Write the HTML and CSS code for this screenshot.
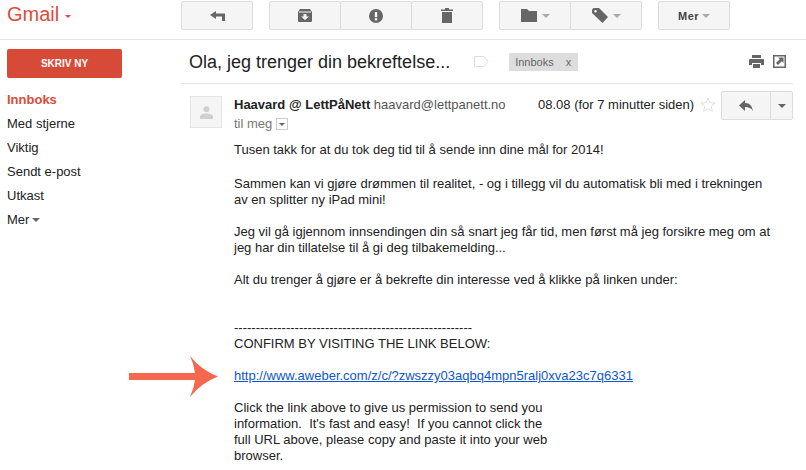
FILE: index.html
```html
<!DOCTYPE html>
<html lang="no">
<head>
    <meta charset="UTF-8">
    <title>Gmail</title>
    <link rel="stylesheet" href="styles.css">
</head>
<body>
    <header class="topbar">
        <div class="logo">Gmail<span class="logo-caret"></span></div>
        <div class="toolbar">
            <div class="btn-group back-group">
                <button class="btn btn-back">
                    <svg width="15" height="10" viewBox="0 0 15 10"><path d="M0 4 6 0v2.500h9V10h-3V5.500H6V8z" fill="#666"/></svg>
                </button>
            </div>
            <div class="btn-group action-group">
                <button class="btn btn-action">
                    <svg width="14" height="13" viewBox="0 0 14 13"><path d="M2 0h10l2 3v9a1 1 0 0 1-1 1H1a1 1 0 0 1-1-1V3z" fill="#666"/><path d="M5.500 5h3v2.500H11L7 11 3 7.500h2.500z" fill="#f5f5f5"/><rect x="1" y="2.500" width="12" height="1" fill="#f5f5f5"/></svg>
                </button>
                <button class="btn btn-action">
                    <svg width="14" height="14" viewBox="0 0 14 14"><circle cx="7" cy="7" r="7" fill="#666"/><rect x="5.800" y="3" width="2.400" height="5.200" fill="#f5f5f5"/><rect x="5.800" y="9.300" width="2.400" height="2.200" fill="#f5f5f5"/></svg>
                </button>
                <button class="btn btn-action">
                    <svg width="12" height="15" viewBox="0 0 12 15"><path d="M4 0h4v1.500h4V3H0V1.500h4zM1 4h10v11H1z" fill="#666"/></svg>
                </button>
            </div>
            <div class="btn-group label-group">
                <button class="btn btn-drop">
                    <svg width="16" height="13" viewBox="0 0 16 13"><path d="M0 0h6l2 2h8v11H0z" fill="#666"/></svg>
                    <span class="caret"></span>
                </button>
                <button class="btn btn-drop">
                    <svg width="16" height="15" viewBox="0 0 16 15"><path d="M0 1.500 1.500 0H7l9 9-5.500 6L0 5z" fill="#666"/><circle cx="3.500" cy="3.200" r="1.200" fill="#f5f5f5"/></svg>
                    <span class="caret"></span>
                </button>
            </div>
            <div class="btn-group more-group">
                <button class="btn btn-more">Mer <span class="caret"></span></button>
            </div>
        </div>
    </header>

    <div class="main">
        <nav class="sidebar">
            <a class="compose">SKRIV NY</a>
            <ul class="folders">
                <li class="active">Innboks</li>
                <li>Med stjerne</li>
                <li>Viktig</li>
                <li>Sendt e-post</li>
                <li>Utkast</li>
                <li>Mer<span class="caret caret-dark caret-mer"></span></li>
            </ul>
        </nav>

        <section class="thread">
            <div class="subject-row">
                <h1 class="subject">Ola, jeg trenger din bekreftelse...</h1>
                <svg class="subject-tag" width="15" height="11" viewBox="0 0 15 11"><path d="M.5.500h9.500l4 5-4 5H.5z" fill="#fff" stroke="#ddd"/></svg>
                <span class="chip">Innboks <b>x</b></span>
                <span class="subject-icons">
                    <svg width="15" height="13" viewBox="0 0 15 13"><path d="M3 0h9v3H3zM1 4h13a1 1 0 0 1 1 1v5h-3V8H3v2H0V5a1 1 0 0 1 1-1zM4 9h7v4H4z" fill="#666"/></svg>
                    <svg width="13" height="13" viewBox="0 0 13 13"><path d="M0 0h13v13H0zM1.500 1.500v10h10v-10z" fill="#666"/><path d="M5 2.500h5.500V8L8.700 6.200 5 10 3 8l3.800-3.700z" fill="#666"/></svg>
                </span>
            </div>

            <div class="message">
                <div class="avatar">
                    <svg width="13" height="13" viewBox="0 0 13 13"><circle cx="6.500" cy="3.300" r="3" fill="#d0d0d0"/><path d="M0 13v-2.500C0 8.500 3 7.500 6.500 7.500s6.500 1 6.500 3V13z" fill="#d0d0d0"/></svg>
                </div>
                <div class="message-content">
                    <div class="message-head">
                        <div class="sender"><b>Haavard @ LettPåNett</b> <span class="address">haavard@lettpanett.no</span></div>
                        <span class="date">08.08 (for 7 minutter siden)</span>
                        <svg class="star" width="16" height="15" viewBox="0 0 16 15"><path d="m8 1 2 4.700 5 .4-3.800 3.300 1.200 4.900L8 11.700l-4.400 2.600 1.200-4.900L1 6.100l5-.4z" fill="#fff" stroke="#dedede"/></svg>
                        <div class="reply-group">
                            <button class="btn btn-reply">
                                <svg width="14" height="11" viewBox="0 0 14 11"><path d="M6 0v3c5 0 7 3 8 8-2-3-4-4-8-4v4L0 5.500z" fill="#666"/></svg>
                            </button>
                            <button class="btn btn-reply-more"><span class="caret caret-dark"></span></button>
                        </div>
                    </div>
                    <div class="to-me">til meg <span class="to-toggle"><span class="caret caret-dark caret-tiny"></span></span></div>
                    <div class="body-text">
                        <p class="intro">Tusen takk for at du tok deg tid til å sende inn dine mål for 2014!</p>
                        <p>Sammen kan vi gjøre drømmen til realitet, - og i tillegg vil du automatisk bli med i trekningen<br>av en splitter ny iPad mini!</p>
                        <p>Jeg vil gå igjennom innsendingen din så snart jeg får tid, men først må jeg forsikre meg om at<br>jeg har din tillatelse til å gi deg tilbakemelding...</p>
                        <p class="gap-after">Alt du trenger å gjøre er å bekrefte din interesse ved å klikke på linken under:</p>
                        <p><span class="dashes">-------------------------------------------------------</span><br>CONFIRM BY VISITING THE LINK BELOW:</p>
                        <p><a href="#">http://www.aweber.com/z/c/?zwszzy03aqbq4mpn5ralj0xva23c7q6331</a></p>
                        <p>Click the link above to give us permission to send you<br>information.&nbsp; It's fast and easy!&nbsp; If you cannot click the<br>full URL above, please copy and paste it into your web<br>browser.</p>
                    </div>
                </div>
            </div>
        </section>
    </div>

    <!-- annotation painted on top of the screenshot -->
    <svg class="arrow" width="90" height="42" viewBox="0 0 90 42"><path d="M0 17H66Q65 8 61 0 72 14 89 20.500 72 27 61 41 65 32 66 24H0z" fill="#f4694e"/></svg>
</body>
</html>
```

FILE: styles.css
```css
html, body {
    margin: 0;
    padding: 0;
}
body {
    width: 806px;
    height: 470px;
    overflow: hidden;
    background-color: #fff;
    color: #222;
    font-family: "Liberation Sans", Arial, sans-serif;
    font-size: 13px;
    position: relative;
}
.topbar {
    display: flex;
    height: 39px;
    border-bottom: 1px solid #e5e5e5;
}
.logo {
    width: 181px;
    box-sizing: border-box;
    padding: 2px 0 0 7px;
    color: #dd4b39;
    font-size: 20px;
    line-height: 24px;
}
.logo-caret {
    display: inline-block;
    margin: 0 0 3px 6px;
    border: 3.500px solid transparent;
    border-top-color: #dd4b39;
    border-bottom: 0;
}
.toolbar {
    display: flex;
    padding-top: 1px;
}
.btn-group {
    display: flex;
    height: 29px;
    margin-right: 16px;
}
.btn {
    display: flex;
    align-items: center;
    justify-content: center;
    height: 29px;
    padding: 0;
    box-sizing: border-box;
    background-color: #f5f5f5;
    border: 1px solid #dcdcdc;
    border-radius: 2px;
    font-family: inherit;
}
.btn-group .btn + .btn {
    margin-left: -1px;
}
.btn-back {
    width: 72px;
}
.btn-action {
    width: 72px;
}
.btn-drop {
    width: 72px;
    gap: 5px;
}
.btn-more {
    width: 72px;
    gap: 3px;
    color: #444;
    font-size: 11px;
    font-weight: bold;
    letter-spacing: .5px;
}
.caret {
    display: inline-block;
    border: 4px solid transparent;
    border-top-color: #aaa;
    border-bottom: 0;
}
.caret-dark {
    border-top-color: #666;
}
.caret-tiny {
    border-width: 3px;
    border-bottom: 0;
}
.caret-mer {
    margin: 0 0 2px 3px;
}
.main {
    display: flex;
}
.sidebar {
    width: 181px;
    flex: none;
    box-sizing: border-box;
    padding: 9px 0 0 7px;
}
.compose {
    display: block;
    width: 115px;
    height: 29px;
    box-sizing: border-box;
    background-color: #d84a38;
    border-radius: 2px;
    color: #fff;
    font-size: 10px;
    font-weight: bold;
    line-height: 29px;
    text-align: center;
}
.folders {
    list-style: none;
    margin: 10px 0 0;
    padding: 0;
}
.folders li {
    height: 24px;
    line-height: 24px;
}
.folders .active {
    color: #dd4b39;
    font-weight: bold;
}
.thread {
    width: 612px;
}
.subject-row {
    display: flex;
    align-items: center;
    height: 43px;
    border-bottom: 1px solid #e5e5e5;
    padding-left: 8px;
}
.subject {
    margin: 0;
    font-size: 18px;
    font-weight: normal;
    line-height: 24px;
}
.subject-tag {
    margin-left: 24px;
}
.chip {
    display: flex;
    justify-content: space-between;
    width: 69px;
    height: 18px;
    box-sizing: border-box;
    margin: 1px 0 0 20px;
    padding: 0 7px 0 6px;
    background-color: #ddd;
    color: #666;
    font-size: 11px;
    line-height: 18px;
}
.chip b {
    font-weight: normal;
}
.subject-icons {
    display: flex;
    gap: 9px;
    margin-left: auto;
    padding-right: 7px;
}
.message {
    display: flex;
    padding: 12px 0 0 9px;
}
.avatar {
    display: flex;
    align-items: center;
    justify-content: center;
    flex: none;
    width: 32px;
    height: 32px;
    box-sizing: border-box;
    background-color: #f5f5f5;
    border: 1px solid #e5e5e5;
}
.message-content {
    flex: 1;
    padding-left: 12px;
}
.message-head {
    display: flex;
    align-items: flex-start;
    height: 28px;
    margin-top: -5px;
}
.sender {
    flex: none;
    width: 304px;
    line-height: 28px;
}
.address {
    color: #555;
}
.date {
    flex: none;
    width: 156px;
    white-space: nowrap;
    line-height: 28px;
}
.star {
    flex: none;
    margin: 6px 0 0 6px;
}
.reply-group {
    display: flex;
    flex: none;
    margin-left: 5px;
}
.btn-reply {
    width: 50px;
    border-radius: 2px 0 0 2px;
}
.btn-reply-more {
    width: 23px;
    margin-left: -1px;
    border-radius: 0 2px 2px 0;
}
.to-me {
    display: flex;
    align-items: center;
    gap: 4px;
    margin-top: -2px;
    color: #777;
    line-height: 14px;
}
.to-toggle {
    display: flex;
    align-items: center;
    justify-content: center;
    width: 12px;
    height: 12px;
    box-sizing: border-box;
    border: 1px solid #ccc;
}
.body-text {
    margin-top: 11px;
    line-height: 16px;
}
.body-text p {
    margin: 0 0 16px;
}
.body-text .intro {
    margin-bottom: 18px;
}
.body-text .gap-after {
    margin-bottom: 32px;
}
.body-text a {
    color: #15c;
    text-decoration: underline;
}
.arrow {
    position: absolute;
    left: 129px;
    top: 356px;
}
```
